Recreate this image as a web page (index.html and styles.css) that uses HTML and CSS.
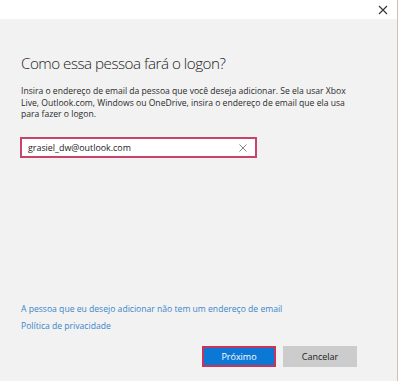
FILE: index.html
```html
<!DOCTYPE html>
<html lang="pt">
<head>
<meta charset="utf-8">
<link rel="stylesheet" href="styles.css">
</head>
<body>
<div class="window">
  <div class="titlebar">
    <span class="close">
      <svg width="10" height="10" viewBox="0 0 10 10"><path d="M1 1L9 9M9 1L1 9" stroke="#333" stroke-width="1.1"/></svg>
    </span>
  </div>
  <div class="content">
    <h1 class="title">Como essa pessoa fará o logon?</h1>
    <p class="desc">Insira o endereço de email da pessoa que você deseja adicionar. Se ela usar Xbox Live, Outlook.com, Windows ou OneDrive, insira o endereço de email que ela usa para fazer o logon.</p>
    <div class="field">
      <span class="value">grasiel_dw@outlook.com</span>
      <svg class="clear" width="8" height="8" viewBox="0 0 8 8"><path d="M0.5 0.5L7.5 7.5M7.5 0.5L0.5 7.5" stroke="#777" stroke-width="0.9"/></svg>
    </div>
    <div class="spacer"></div>
    <a class="link">A pessoa que eu desejo adicionar não tem um endereço de email</a>
    <a class="link">Política de privacidade</a>
    <div class="buttons">
      <span class="btn primary">Próximo</span>
      <span class="btn secondary">Cancelar</span>
    </div>
  </div>
</div>
</body>
</html>
```
FILE: styles.css
```css
html, body {
  margin: 0;
  padding: 0;
  background: #ffffff;
}
body {
  width: 400px;
  height: 385px;
  overflow: hidden;
  font-family: "Open Sans", "Noto Sans", sans-serif;
}
.window {
  width: 397px;
  height: 381px;
  border-right: 1px solid #d8bcb4;
  display: flex;
  flex-direction: column;
  background: #f2f2f2;
}
.titlebar {
  height: 19px;
  background: #ffffff;
  display: flex;
  justify-content: flex-end;
  align-items: center;
  padding-right: 9px;
}
.close {
  display: flex;
  width: 10px;
  height: 10px;
}
.content {
  flex: 1;
  display: flex;
  flex-direction: column;
  padding: 0 20px 0 21px;
}
.title {
  margin: 34px 0 0 0;
  font-weight: 300;
  font-size: 15.2px;
  letter-spacing: -0.5px;
  line-height: 20px;
  color: #222;
}
.desc {
  margin: 13px 0 0 0;
  font-size: 8.6px;
  line-height: 11.7px;
  color: #2a2a2a;
  width: 330px;
}
.field {
  box-sizing: border-box;
  margin: 16px 0 0 -1px;
  width: 237px;
  height: 21px;
  border: 2px solid #c9446a;
  background: #fff;
  display: flex;
  align-items: center;
  justify-content: space-between;
  padding: 0 8px 0 6px;
}
.value {
  font-size: 8.9px;
  color: #222;
}
.clear {
  display: block;
}
.spacer {
  flex: 1;
}
.link {
  font-size: 8.6px;
  line-height: 17px;
  color: #3a86c8;
}
.buttons {
  display: flex;
  justify-content: flex-end;
  gap: 7px;
  margin: 11px 20px 14px 0;
}
.btn {
  width: 74px;
  height: 21px;
  box-sizing: border-box;
  display: flex;
  align-items: center;
  justify-content: center;
  font-size: 9px;
}
.primary {
  background: #0b78d6;
  color: #fff;
  border: 2px solid #c8345a;
}
.secondary {
  background: #cccccc;
  color: #222;
}
```
